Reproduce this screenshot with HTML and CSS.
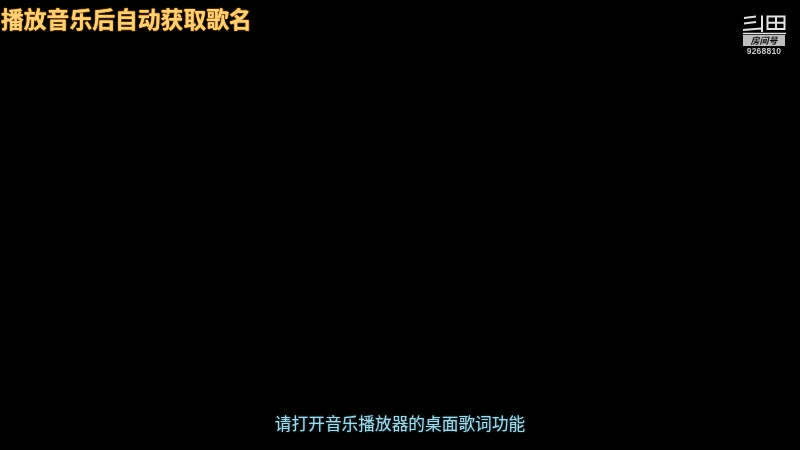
FILE: index.html
```html
<!DOCTYPE html>
<html lang="zh">
<head>
<meta charset="utf-8">
<title>播放音乐</title>
<link rel="stylesheet" href="styles.css">
</head>
<body>
<main class="stage">
  <header class="top">
    <h1 class="song">播放音乐后自动获取歌名</h1>
    <div class="logo">
      <svg class="logo-mark" viewBox="0 0 44 20" width="44" height="20" aria-hidden="true">
        <g fill="none" stroke="#e2e2e2" stroke-width="2">
          <path d="M2 3 L14 1.5 M2 8.5 L14 7 M1 15 L19 13.5 M20 0.5 L20 17"/>
          <path d="M25.500 1.500 H42.500 V14 H25.500 Z M25.500 7.700 H42.500 M34 1.500 V14"/>
          <path d="M1 18.500 H44" stroke-width="1.400"/>
        </g>
      </svg>
      <div class="logo-badge">房间号</div>
      <div class="logo-id">9268810</div>
    </div>
  </header>
  <p class="lyric">请打开音乐播放器的桌面歌词功能</p>
</main>
</body>
</html>
```

FILE: styles.css
```css
* { box-sizing: border-box; }
html, body { margin: 0; height: 100%; background: #000; }
.stage {
  width: 800px;
  height: 450px;
  background: #000;
  display: flex;
  flex-direction: column;
  justify-content: space-between;
  overflow: hidden;
  font-family: "Noto Sans CJK SC", "Noto Sans", sans-serif;
}
.top {
  display: flex;
  justify-content: space-between;
  align-items: flex-start;
  padding: 0 14px 0 1px;
}
.song {
  margin: 0;
  font-size: 22.8px;
  line-height: 38px;
  height: 38px;
  font-weight: 700;
  color: #ffd27a;
  text-shadow: 0 0 1px #e08a2a, 0 0 2px #a85f12, 0 0 1px #a85f12;
  white-space: nowrap;
  filter: blur(0.4px);
}
.logo {
  margin-top: 15px;
  width: 44px;
  display: flex;
  flex-direction: column;
  align-items: center;
  filter: blur(0.45px);
}
.logo-mark { display: block; }
.logo-badge {
  width: 42px;
  height: 11px;
  background: #bdbdbd;
  color: #111;
  font-size: 9px;
  line-height: 11px;
  font-weight: 700;
  font-style: italic;
  text-align: center;
}
.logo-id {
  font-family: "Liberation Sans", sans-serif;
  font-size: 8.5px;
  font-weight: 700;
  line-height: 11px;
  color: #c8c8c8;
  letter-spacing: 0.2px;
}
.lyric {
  margin: 0 0 15px;
  text-align: center;
  font-size: 16.7px;
  line-height: 24px;
  color: #a9d6e4;
  text-shadow: 0 0 2px #2f7a90;
  filter: blur(0.4px);
}
```
